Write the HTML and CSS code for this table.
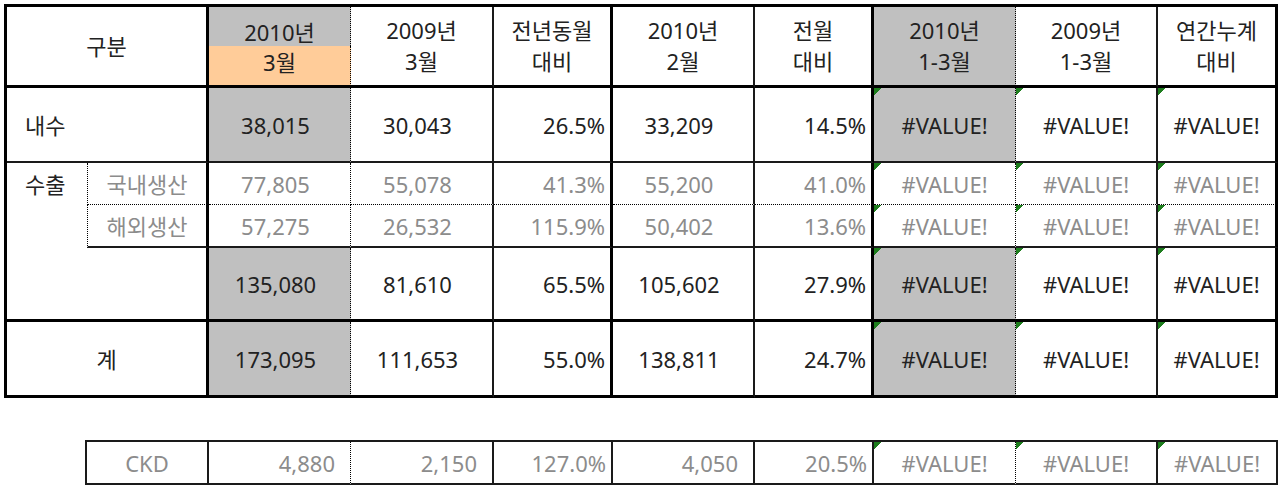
FILE: index.html
```html
<!DOCTYPE html>
<html lang="ko">
<head>
<meta charset="utf-8">
<title>판매 실적</title>
<link rel="stylesheet" href="styles.css">
</head>
<body>
<div class="sheet">
  <div class="grid main">
    <!-- header -->
    <div class="c ctr hd span2 rows2 r3 b3">구분</div>
    <div class="c ctr hd top-line gray rd col3 row1">2010년</div>
    <div class="c ctr hd rows2 r2 b3">2009년<br>3월</div>
    <div class="c ctr hd rows2 r3 b3">전년동월<br>대비</div>
    <div class="c ctr hd rows2 r2 b3">2010년<br>2월</div>
    <div class="c ctr hd rows2 r3 b3">전월<br>대비</div>
    <div class="c ctr hd rows2 gray rd b3">2010년<br>1-3월</div>
    <div class="c ctr hd rows2 r2 b3">2009년<br>1-3월</div>
    <div class="c ctr hd rows2 r3 b3">연간누계<br>대비</div>
    <div class="c ctr hd bottom-line tan rd b3 col3 row2">3월</div>

    <!-- 내수 -->
    <div class="c lft span2 r3 b2">내수</div>
    <div class="c num gray rd b2">38,015</div>
    <div class="c num r2 b2">30,043</div>
    <div class="c rt r3 b2">26.5%</div>
    <div class="c num r2 b2">33,209</div>
    <div class="c rt r3 b2">14.5%</div>
    <div class="c ctr err gray rd b2">#VALUE!</div>
    <div class="c ctr err r2 b2">#VALUE!</div>
    <div class="c ctr err r3 b2">#VALUE!</div>

    <!-- 수출 : 국내생산 -->
    <div class="c lft label-top rows3 b3">수출</div>
    <div class="c ctr dim ld r3 bd">국내생산</div>
    <div class="c num dim rd bd">77,805</div>
    <div class="c num dim r2 bd">55,078</div>
    <div class="c rt dim r3 bd">41.3%</div>
    <div class="c num dim r2 bd">55,200</div>
    <div class="c rt dim r3 bd">41.0%</div>
    <div class="c ctr err dim rd bd">#VALUE!</div>
    <div class="c ctr err dim r2 bd">#VALUE!</div>
    <div class="c ctr err dim r3 bd">#VALUE!</div>

    <!-- 수출 : 해외생산 -->
    <div class="c ctr dim ld r3 b2">해외생산</div>
    <div class="c num dim rd b2">57,275</div>
    <div class="c num dim r2 b2">26,532</div>
    <div class="c rt dim r3 b2">115.9%</div>
    <div class="c num dim r2 b2">50,402</div>
    <div class="c rt dim r3 b2">13.6%</div>
    <div class="c ctr err dim rd b2">#VALUE!</div>
    <div class="c ctr err dim r2 b2">#VALUE!</div>
    <div class="c ctr err dim r3 b2">#VALUE!</div>

    <!-- 수출 소계 -->
    <div class="c r3 b3"></div>
    <div class="c num gray rd b3">135,080</div>
    <div class="c num r2 b3">81,610</div>
    <div class="c rt r3 b3">65.5%</div>
    <div class="c num r2 b3">105,602</div>
    <div class="c rt r3 b3">27.9%</div>
    <div class="c ctr err gray rd b3">#VALUE!</div>
    <div class="c ctr err r2 b3">#VALUE!</div>
    <div class="c ctr err r3 b3">#VALUE!</div>

    <!-- 계 -->
    <div class="c ctr span2 r3 b3">계</div>
    <div class="c num gray rd b3">173,095</div>
    <div class="c num r2 b3">111,653</div>
    <div class="c rt r3 b3">55.0%</div>
    <div class="c num r2 b3">138,811</div>
    <div class="c rt r3 b3">24.7%</div>
    <div class="c ctr err gray rd b3">#VALUE!</div>
    <div class="c ctr err r2 b3">#VALUE!</div>
    <div class="c ctr err r3 b3">#VALUE!</div>
  </div>

  <div class="grid ckd dim">
    <div class="c ctr r2 b2">CKD</div>
    <div class="c rt pad rd b2">4,880</div>
    <div class="c rt pad r2 b2">2,150</div>
    <div class="c rt r2 b2">127.0%</div>
    <div class="c rt pad r2 b2">4,050</div>
    <div class="c rt r2 b2">20.5%</div>
    <div class="c ctr err rd b2">#VALUE!</div>
    <div class="c ctr err r2 b2">#VALUE!</div>
    <div class="c ctr err r2 b2">#VALUE!</div>
  </div>
</div>
</body>
</html>
```

FILE: styles.css
```css
* {
  box-sizing: border-box;
}

html,
body {
  margin: 0;
  background: #ffffff;
}

body {
  font-family: "Noto Sans", "Noto Sans CJK KR", sans-serif;
  font-size: 22px;
  color: #222222;
}

.sheet {
  padding: 4px 0 0 4px;
}

.grid {
  display: grid;
}

.main {
  width: 1274px;
  border-top: 3px solid #000;
  border-left: 3px solid #000;
  grid-template-columns: 80px 122px 142px 143px 119px 142px 119px 142px 142px 120px;
  grid-template-rows: 39px 42px 75px 42px 43px 74px 76px;
}

.ckd {
  width: 1193px;
  margin: 42px 0 0 81px;
  border-top: 2px solid #1a1a1a;
  border-left: 2px solid #1a1a1a;
  grid-template-columns: 122px 142px 143px 119px 142px 119px 142px 142px 120px;
  grid-template-rows: 43px;
}

/* cell base */
.c {
  display: flex;
  align-items: center;
  min-width: 0;
  white-space: nowrap;
  line-height: 30px;
}

.ctr {
  justify-content: center;
  text-align: center;
}

.num {
  justify-content: center;
  padding-right: 8px;
}

.rt {
  justify-content: flex-end;
  padding-right: 5px;
}

.rt.pad {
  padding-right: 15px;
}

.lft {
  justify-content: flex-start;
  padding-left: 18px;
}

.label-top {
  align-items: flex-start;
  padding-top: 6px;
}

/* header */
.hd {
  line-height: 31px;
}

.top-line {
  align-items: flex-start;
  padding-top: 10px;
}

.bottom-line {
  align-items: flex-start;
  padding-top: 1px;
}

/* spans */
.span2 {
  grid-column: span 2;
}

.rows2 {
  grid-row: span 2;
}

.rows3 {
  grid-row: span 3;
}

.col3 {
  grid-column: 3;
}

.row1 {
  grid-row: 1;
}

.row2 {
  grid-row: 2;
}

/* borders */
.r3 {
  border-right: 3px solid #000;
}

.r2 {
  border-right: 2px solid #1a1a1a;
}

.rd {
  border-right: 1px dotted #000;
}

.b3 {
  border-bottom: 3px solid #000;
}

.b2 {
  border-bottom: 2px solid #1a1a1a;
}

.bd {
  border-bottom: 1px dotted #000;
}

.ld {
  border-left: 1px dotted #000;
}

/* fills */
.gray {
  background-color: #c0c0c0;
}

.tan {
  background-color: #ffcc99;
}

.dim {
  color: #8c8c8c;
}

/* Excel error indicator */
.err {
  background-image: linear-gradient(135deg, #1d7d1d 50%, transparent 50%);
  background-size: 8px 8px;
  background-repeat: no-repeat;
  background-position: 0 0;
}
```
